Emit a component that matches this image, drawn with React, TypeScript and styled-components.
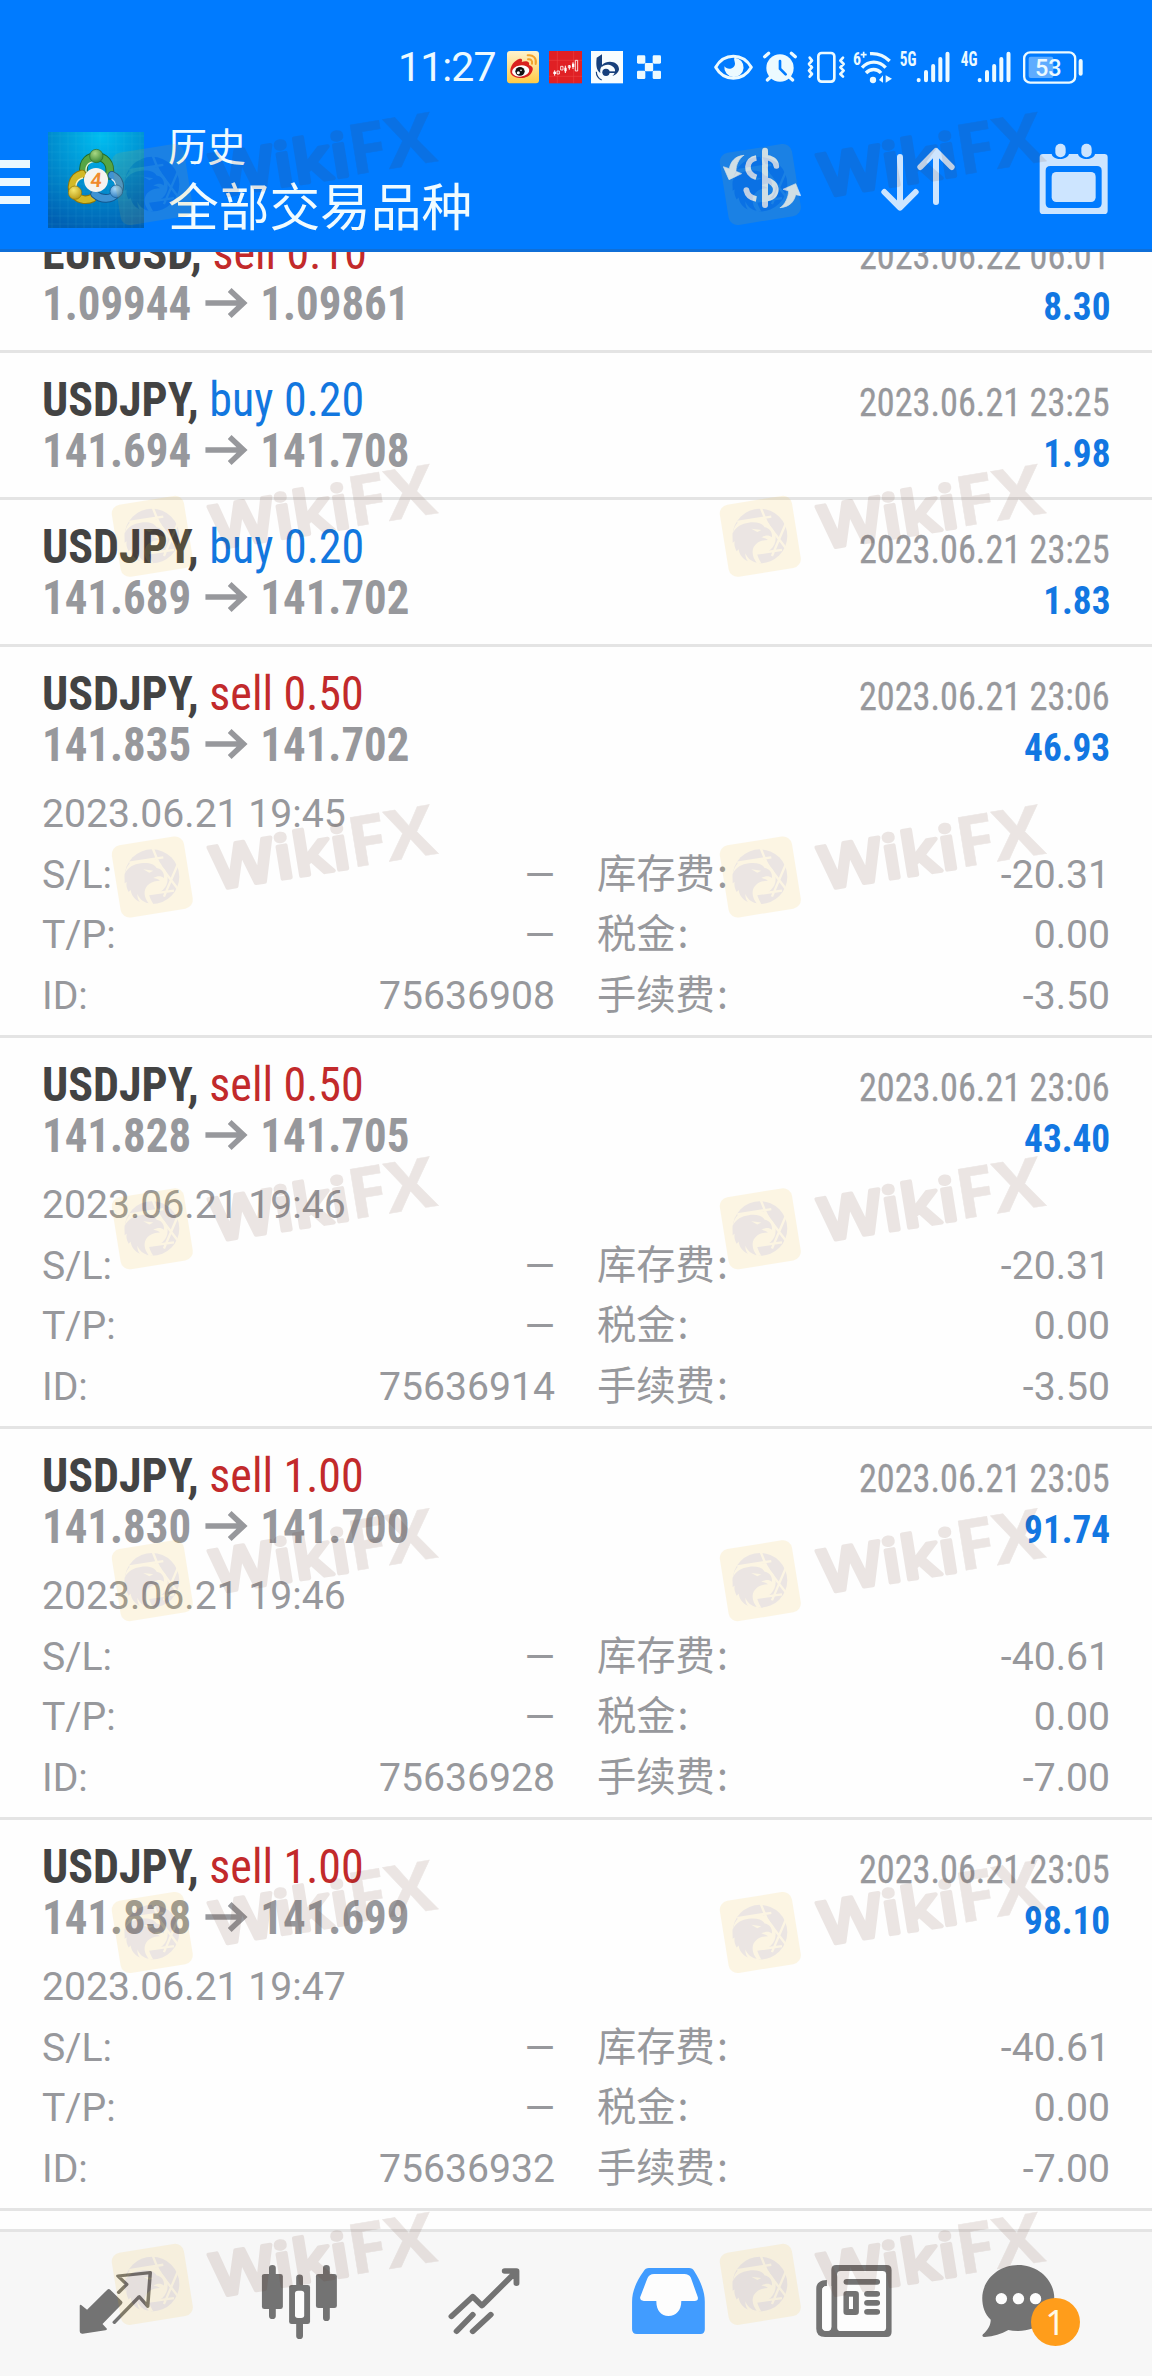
import React from "react";
import styled, { createGlobalStyle } from "styled-components";

const ROBOTO = `Roboto, "Noto Sans CJK SC", sans-serif`;
const CONDENSED = `"Roboto Condensed", Roboto, "Noto Sans CJK SC", sans-serif`;
const CJK = `"Noto Sans CJK SC", sans-serif`;

const GlobalStyle = createGlobalStyle`
  * { box-sizing: border-box; }
  body { margin: 0; background: #fff; }
`;

const Screen = styled.div`
  position: relative;
  width: 1152px;
  height: 2376px;
  display: flex;
  flex-direction: column;
  overflow: hidden;
  background: #fefefe;
  font-family: ${ROBOTO};
`;

/* ---------- status bar ---------- */

const StatusBar = styled.div`
  flex: none;
  height: 114px;
  padding: 51px 0 0 398px;
  display: flex;
  align-items: flex-start;
  background: #007bff;
  color: #ecf9ff;
`;

const Clock = styled.div`
  width: 109px;
  height: 33px;
  line-height: 33px;
  font-size: 41px;
  letter-spacing: -0.9px;
`;

const Glyph = styled.svg<{ $w: number; $gap?: number }>`
  flex: none;
  display: block;
  width: ${(p) => p.$w}px;
  height: 33px;
  margin-left: ${(p) => p.$gap ?? 0}px;
  overflow: visible;
`;

/* ---------- app bar ---------- */

const AppBar = styled.header`
  flex: none;
  height: 138px;
  padding-right: 44px;
  display: flex;
  align-items: flex-start;
  background: #007bff;
  border-bottom: 3px solid #0f6fd8;
`;

const Burger = styled.div`
  width: 30px;
  margin-top: 46px;
  display: flex;
  flex-direction: column;
  gap: 10px;
`;

const BurgerLine = styled.span`
  height: 8px;
  background: #eaf8ff;
`;

const Logo = styled.svg`
  width: 96px;
  height: 96px;
  margin: 18px 0 0 18px;
`;

const Titles = styled.div`
  margin-left: 24px;
  color: #f0fbff;
  font-family: ${CJK};
`;

const Title = styled.div<{ $size: number }>`
  height: 60px;
  line-height: 60px;
  font-size: ${(p) => p.$size}px;
`;

const Actions = styled.div`
  margin-left: auto;
  padding-top: 27px;
  display: flex;
  gap: 81px;
`;

const ActionIcon = styled.svg<{ $w: number; $nudge?: string }>`
  display: block;
  width: ${(p) => p.$w}px;
  height: 76px;
  margin: ${(p) => p.$nudge ?? "0"};
`;

/* ---------- deals ---------- */

const List = styled.main`
  flex: 1;
  min-height: 0;
  overflow: hidden;
  background: #fefefe;
`;

const Scroller = styled.div`
  margin-top: -46px;
`;

const Deal = styled.article<{ $open: boolean }>`
  height: ${(p) => (p.$open ? 391 : 147)}px;
  padding: 21px 42px 0;
  border-bottom: 3px solid #e4e4e4;
`;

const Line = styled.div`
  height: 51px;
  display: flex;
  justify-content: space-between;
  align-items: baseline;
  line-height: 51px;
  font-family: ${CONDENSED};
  font-stretch: 75%;
  white-space: pre;
`;

const Symbol = styled.div`
  font-size: 48px;
  font-weight: 700;
  color: #434343;
  transform: scaleX(0.958);
  transform-origin: left;
`;

const Side = styled.span<{ $buy: boolean }>`
  font-weight: 400;
  color: ${(p) => (p.$buy ? "#1277df" : "#c22a2b")};
`;

const Prices = styled.div`
  display: flex;
  align-items: baseline;
  font-size: 48px;
  font-weight: 700;
  color: #97989c;
  transform: scaleX(0.935);
  transform-origin: left;
`;

const Arrow = styled.svg`
  display: block;
  width: 74px;
  height: 34px;
`;

const Stamp = styled.div`
  font-size: 39px;
  color: #97989c;
  -webkit-text-stroke: 0.3px #97989c;
  transform: scaleX(0.93);
  transform-origin: right;
`;

const Profit = styled.div`
  font-size: 39px;
  font-weight: 700;
  color: #1277e2;
  transform: scaleX(0.955);
  transform-origin: right;
`;

const Details = styled.div`
  margin-top: 14px;
  display: grid;
  grid-template-columns: 1fr 1fr;
  column-gap: 42px;
  grid-auto-rows: 60.67px;
  color: #97989c;
  font-size: 39.15px;
  line-height: 60.67px;
  white-space: pre;
`;

const Opened = styled.div`
  grid-column: 1 / -1;
`;

const Field = styled.div`
  display: flex;
  justify-content: space-between;
  align-items: baseline;
`;

const CjkLabel = styled.span`
  font-family: ${CJK};
  font-size: 39.3px;
  line-height: 39px;
`;

const Colon = styled.span`
  margin-left: 2px;
`;

/* ---------- tab bar ---------- */

const TabBar = styled.nav`
  flex: none;
  height: 147px;
  padding: 31px 22px 0;
  display: grid;
  grid-template-columns: repeat(6, 1fr);
  justify-items: center;
  align-items: start;
  background: #f7f7f7;
  border-top: 3px solid #e4e4e4;
`;

const Tab = styled.div`
  position: relative;
  width: 120px;
  height: 84px;
`;

const TabIcon = styled.svg`
  display: block;
  width: 120px;
  height: 84px;
`;

const Badge = styled.span`
  position: absolute;
  left: 53px;
  top: 35px;
  width: 49px;
  height: 48px;
  border-radius: 50%;
  background: #ff9d1b;
  color: #fff9e6;
  font: 35px/48px "Noto Sans", sans-serif;
  text-align: center;
`;

/* ---------- watermark ---------- */

const Overlay = styled.svg`
  position: absolute;
  inset: 0;
  width: 1152px;
  height: 2376px;
  pointer-events: none;
`;

const MarkText = styled.text<{ $weight: number }>`
  font-family: "Open Sans", "Noto Sans", sans-serif;
  font-weight: ${(p) => p.$weight};
  fill: #5a2814;
  stroke: #5a2814;
  stroke-linejoin: round;
`;

type DealData = {
  symbol: string;
  side: "buy" | "sell";
  volume: string;
  from: string;
  to: string;
  closed: string;
  profit: string;
  details?: { opened: string; id: string; swap: string; tax: string; fee: string };
};

const deals: DealData[] = [
  { symbol: "EURUSD", side: "sell", volume: "0.10", from: "1.09944", to: "1.09861", closed: "2023.06.22 06:01", profit: "8.30" },
  { symbol: "USDJPY", side: "buy", volume: "0.20", from: "141.694", to: "141.708", closed: "2023.06.21 23:25", profit: "1.98" },
  { symbol: "USDJPY", side: "buy", volume: "0.20", from: "141.689", to: "141.702", closed: "2023.06.21 23:25", profit: "1.83" },
  {
    symbol: "USDJPY", side: "sell", volume: "0.50", from: "141.835", to: "141.702", closed: "2023.06.21 23:06", profit: "46.93",
    details: { opened: "2023.06.21 19:45", id: "75636908", swap: "-20.31", tax: "0.00", fee: "-3.50" },
  },
  {
    symbol: "USDJPY", side: "sell", volume: "0.50", from: "141.828", to: "141.705", closed: "2023.06.21 23:06", profit: "43.40",
    details: { opened: "2023.06.21 19:46", id: "75636914", swap: "-20.31", tax: "0.00", fee: "-3.50" },
  },
  {
    symbol: "USDJPY", side: "sell", volume: "1.00", from: "141.830", to: "141.700", closed: "2023.06.21 23:05", profit: "91.74",
    details: { opened: "2023.06.21 19:46", id: "75636928", swap: "-40.61", tax: "0.00", fee: "-7.00" },
  },
  {
    symbol: "USDJPY", side: "sell", volume: "1.00", from: "141.838", to: "141.699", closed: "2023.06.21 23:05", profit: "98.10",
    details: { opened: "2023.06.21 19:47", id: "75636932", swap: "-40.61", tax: "0.00", fee: "-7.00" },
  },
];

function Fee({ label, value }: { label: string; value: string }) {
  return (
    <Field>
      <CjkLabel>{label}<Colon>:</Colon></CjkLabel>
      <span>{value}</span>
    </Field>
  );
}

function DealRow({ deal }: { deal: DealData }) {
  const d = deal.details;
  return (
    <Deal $open={!!d}>
      <Line>
        <Symbol>
          {deal.symbol}, <Side $buy={deal.side === "buy"}>{deal.side} {deal.volume}</Side>
        </Symbol>
        <Stamp>{deal.closed}</Stamp>
      </Line>
      <Line>
        <Prices>
          <span>{deal.from}</span>
          <Arrow viewBox="0 0 70 34" preserveAspectRatio="none">
            <path d="M14 17H53M38.5 4L52.5 17L38.5 30" fill="none" stroke="#97989c" strokeWidth="5.6" />
          </Arrow>
          <span>{deal.to}</span>
        </Prices>
        <Profit>{deal.profit}</Profit>
      </Line>
      {d && (
        <Details>
          <Opened>{d.opened}</Opened>
          <Field><span>S/L:</span><span>—</span></Field>
          <Fee label="库存费" value={d.swap} />
          <Field><span>T/P:</span><span>—</span></Field>
          <Fee label="税金" value={d.tax} />
          <Field><span>ID:</span><span>{d.id}</span></Field>
          <Fee label="手续费" value={d.fee} />
        </Details>
      )}
    </Deal>
  );
}

const GLYPH = "#ecfaff";

function SignalBars() {
  return (
    <g stroke={GLYPH} strokeWidth="12" strokeLinecap="round">
      <path d="M56 150V151M78 126V151M99.500 108V151M121 87V151M142.500 71V151" />
    </g>
  );
}

function StatusIcons() {
  return (
    <>
      {/* weibo */}
      <Glyph $w={32} viewBox="0 0 96 99">
        <defs>
          <linearGradient id="wb" x1="0" y1="0" x2="0" y2="1">
            <stop offset="0" stopColor="#fdf3cf" />
            <stop offset="1" stopColor="#ffcb45" />
          </linearGradient>
        </defs>
        <rect width="96" height="97" rx="9" fill="url(#wb)" />
        <path d="M10 60C10 44 22 28 38 23C47 22 46 29 44 33C55 28 70 30 66 42C76 45 80 52 76 60C70 76 54 82 38 81C20 79 10 72 10 60Z" fill="#d9211f" />
        <ellipse cx="41" cy="60" rx="26" ry="17" fill="#fff" transform="rotate(-8 41 60)" />
        <ellipse cx="39" cy="61" rx="14" ry="13" fill="#111" />
        <circle cx="34" cy="65" r="4.500" fill="#fff" />
        <circle cx="42" cy="58" r="2.500" fill="#fff" />
        <path d="M62 13C78 10 90 22 86 39M63 25C71 23 77 29 75 38" fill="none" stroke="#f2a32c" strokeWidth="6" strokeLinecap="round" />
      </Glyph>
      {/* candlestick app */}
      <Glyph $w={33} $gap={9.5} viewBox="0 0 99 99">
        <rect width="99" height="97" fill="#e02024" />
        <path d="M0 28H99M0 76H99M25 0V97M74 0V97" stroke="#ec4a48" strokeWidth="1.500" />
        <path d="M17 58V74M49 44V66M61 42V56M72 34V54" stroke="#fff" strokeWidth="3" />
        <path d="M13 62H21V69H13ZM46 50H53V61H46ZM69 38H76V48H69Z" fill="#fff" />
        <path d="M24 60H31V69H24ZM35 46H42V57H35ZM58 44H64V50H58ZM79 28H86V60H79Z" fill="none" stroke="#fff" strokeWidth="2.500" />
      </Glyph>
      {/* circular b mark */}
      <Glyph $w={32} $gap={9.5} viewBox="0 0 96 99">
        <rect width="96" height="97" fill="#f8fdff" />
        <path d="M17 20L33 10V46C27 52 27 60 28 66C18 58 14 48 17 20Z" fill="#17407c" />
        <path d="M33 42C50 24 84 32 84 54C84 62 76 72 64 75C74 68 76 54 64 46C52 38 38 42 33 48Z" fill="#17407c" />
        <circle cx="45" cy="64" r="11" fill="#17407c" />
        <path d="M50 61H76V66H50Z" fill="#17407c" />
        <path d="M16 62C16 74 22 82 32 87" fill="none" stroke="#17407c" strokeWidth="3.500" />
      </Glyph>
      {/* pixel cluster */}
      <Glyph $w={24} $gap={14} viewBox="0 0 72 99" fill={GLYPH}>
        <rect x="0" y="13" width="25" height="25" rx="4" />
        <rect x="47" y="13" width="25" height="25" rx="4" />
        <rect x="23.500" y="36" width="25" height="25" rx="3" />
        <rect x="0" y="59" width="25" height="25" rx="4" />
        <rect x="47" y="59" width="25" height="25" rx="4" />
      </Glyph>
      {/* eye */}
      <Glyph $w={39} $gap={53} viewBox="0 0 117 99">
        <path d="M5 49C30 5 86 5 112 49C86 93 30 93 5 49Z" fill="none" stroke={GLYPH} strokeWidth="9" strokeLinejoin="round" />
        <path d="M62 20A29 29 0 1 1 31 46C40 58 62 54 63 38C63 30 58 24 62 20Z" fill={GLYPH} />
      </Glyph>
      {/* alarm */}
      <Glyph $w={34} $gap={10} viewBox="0 0 102 99">
        <circle cx="51" cy="51" r="41" fill={GLYPH} />
        <path d="M5 17L17 7M97 17L85 7M13 87L24 77M89 87L78 77" stroke={GLYPH} strokeWidth="10" strokeLinecap="round" />
        <path d="M51 30V53L68 70" fill="none" stroke="#007bff" strokeWidth="8" strokeLinecap="round" />
      </Glyph>
      {/* vibrate */}
      <Glyph $w={39} $gap={10} viewBox="0 0 117 99" fill="none" stroke={GLYPH} strokeWidth="8" strokeLinecap="round" strokeLinejoin="round">
        <rect x="34" y="6" width="48" height="86" rx="10" />
        <path d="M8 20L15 29L6 39L15 49L6 59L15 69L8 77M108 20L100 29L110 39L100 49L110 59L100 69L108 77" />
      </Glyph>
      {/* wifi */}
      <Glyph $w={39} $gap={7} viewBox="0 0 117 99">
        <g fill="none" stroke={GLYPH} strokeWidth="10">
          <path d="M51 8C76 6 94 14 110 30M27 50C47 28 78 28 98 50M39 66C52 52 72 52 84 66" />
        </g>
        <circle cx="60" cy="87" r="9.500" fill={GLYPH} />
        <path d="M90 73V95L78 87ZM98 73L117 83L98 95Z" fill={GLYPH} />
        <text x="0" y="42" fill={GLYPH} fontSize="56" fontWeight="700" fontFamily={CONDENSED} textLength="24" lengthAdjust="spacingAndGlyphs">6</text>
        <path d="M23 11H41M32 2V20" stroke={GLYPH} strokeWidth="5" />
      </Glyph>
      {["5G", "4G"].map((label, i) => (
        <Glyph key={label} $w={50} $gap={i ? 11 : 8} viewBox="0 0 150 99">
          <text x="-1" y="44" fill={GLYPH} fontSize="58" fontWeight="700" fontFamily={CONDENSED} textLength="50" lengthAdjust="spacingAndGlyphs">{label}</text>
          <g transform="translate(0 -63)"><SignalBars /></g>
        </Glyph>
      ))}
      {/* battery */}
      <Glyph $w={60} $gap={11.5} viewBox="0 0 180 99">
        <rect x="3.500" y="4" width="153" height="91" rx="18" fill="none" stroke={GLYPH} strokeWidth="7" />
        <rect x="17" y="17" width="74" height="64" rx="6" fill="#5eacff" />
        <path d="M173 30V68" stroke={GLYPH} strokeWidth="12" strokeLinecap="round" />
        <text x="36" y="75" fill={GLYPH} fontSize="74" fontWeight="500" fontFamily={ROBOTO} textLength="80" lengthAdjust="spacingAndGlyphs">53</text>
      </Glyph>
    </>
  );
}

function MetaTraderLogo() {
  const grid = Array.from({ length: 12 }, (_, i) => 156 + i * 24);
  return (
    <Logo viewBox="144 66 288 288">
      <defs>
        <radialGradient id="sky" cx="0.55" cy="0.05" r="1">
          <stop offset="0" stopColor="#00bdf0" />
          <stop offset="0.5" stopColor="#008fd0" />
          <stop offset="1" stopColor="#005fb2" />
        </radialGradient>
        <radialGradient id="gr" cx="0.4" cy="0.3" r="0.8"><stop offset="0" stopColor="#a9d884" /><stop offset="1" stopColor="#2c7d2a" /></radialGradient>
        <radialGradient id="ye" cx="0.4" cy="0.3" r="0.8"><stop offset="0" stopColor="#f6e76c" /><stop offset="1" stopColor="#b4920c" /></radialGradient>
        <radialGradient id="bl" cx="0.4" cy="0.3" r="0.8"><stop offset="0" stopColor="#a5d8fa" /><stop offset="1" stopColor="#2374bb" /></radialGradient>
      </defs>
      <rect x="144" y="66" width="288" height="288" fill="url(#sky)" />
      {grid.map((g) => (
        <path key={g} d={`M${g} 66V354M144 ${g - 78}H432`} stroke="#5fd0e6" strokeOpacity="0.15" strokeWidth="2" />
      ))}
      <g fill="none" strokeLinecap="round">
        <path d="M251 190C246 150 270 140 289 140C312 140 336 158 328 196" stroke="#1f6a2a" strokeWidth="26" />
        <path d="M251 190C246 150 270 140 289 140C312 140 336 158 328 196" stroke="#55a544" strokeWidth="20" />
        <path d="M258 186C256 162 270 154 289 154" stroke="#e4f3d8" strokeWidth="4" />
        <path d="M246 192C216 200 208 236 226 256C240 272 262 272 278 264" stroke="#8f7608" strokeWidth="26" />
        <path d="M246 192C216 200 208 236 226 256C240 272 262 272 278 264" stroke="#d2b926" strokeWidth="20" />
        <path d="M248 204C228 210 222 230 234 246" stroke="#fbf6c2" strokeWidth="4" />
        <path d="M336 196C360 208 366 232 350 250C334 270 304 270 284 252" stroke="#14578f" strokeWidth="26" />
        <path d="M336 196C360 208 366 232 350 250C334 270 304 270 284 252" stroke="#3f93d3" strokeWidth="20" />
        <path d="M336 208C348 216 350 228 340 240" stroke="#d6eefd" strokeWidth="4" />
      </g>
      <circle cx="289" cy="138" r="20" fill="url(#gr)" stroke="#25692a" strokeWidth="2" />
      <circle cx="225" cy="248" r="20" fill="url(#ye)" stroke="#8f7608" strokeWidth="2" />
      <circle cx="349" cy="244" r="19" fill="url(#bl)" stroke="#14578f" strokeWidth="2" />
      <circle cx="288" cy="210" r="36" fill="#f5f3f0" />
      <text x="288" y="231" textAnchor="middle" fontFamily={ROBOTO} fontWeight="600" fontSize="60" fill="#f08a2c" transform="skewX(-6) translate(23 0)">4</text>
    </Logo>
  );
}

function AppActions() {
  const c = "#cde5ff";
  return (
    <Actions>
      <ActionIcon $w={78} viewBox="189 93 234 228" fill="none" stroke={c} strokeLinecap="round">
        <path d="M315 122V285" strokeWidth="18" />
        <path d="M349 168C347 152 334 143 315 143" strokeWidth="17" />
        <path d="M289 144C259 148 252 190 289 202" strokeWidth="17" strokeLinecap="butt" />
        <path d="M315 210C358 214 358 266 315 266" strokeWidth="17" />
        <path d="M259 240C262 256 272 264 289 267" strokeWidth="17" strokeLinecap="butt" />
        <circle cx="259" cy="240" r="8.500" fill={c} stroke="none" />
        <path d="M251 136C226 138 212 154 208 176L190 170L207 209L245 191L228 184C228 164 236 148 251 136Z" fill={c} stroke={c} strokeWidth="2" strokeLinejoin="round" />
        <path d="M361 293C388 291 402 276 407 254L422 257L407 221L369 238L386 243C385 262 376 282 361 293Z" fill={c} stroke={c} strokeWidth="2" strokeLinejoin="round" />
      </ActionIcon>
      <ActionIcon $w={75} $nudge="0 2px 0 -1px" viewBox="663 93 225 228" fill="none" stroke={c} strokeWidth="18" strokeLinecap="round" strokeLinejoin="round">
        <path d="M720 141V292M673 246L720 293L767 246M828 276V124M781 171L828 123L875 171" />
      </ActionIcon>
      <ActionIcon $w={69} viewBox="1138 93 207 228" fill={c}>
        <path fillRule="evenodd" d="M1150 132H1176C1180 152 1222 152 1228 132H1255C1260 152 1302 152 1306 132H1334Q1344 132 1344 142V302Q1344 312 1334 312H1150Q1140 312 1140 302V142Q1140 132 1150 132ZM1172 168Q1158 168 1158 182V280Q1158 294 1172 294H1312Q1326 294 1326 280V182Q1326 168 1312 168Z" />
        <rect x="1187" y="101" width="31" height="41" rx="15" />
        <rect x="1265" y="101" width="31" height="41" rx="15" />
        <rect x="1176" y="186" width="132" height="90" rx="14" />
      </ActionIcon>
    </Actions>
  );
}

const INK = "#737373";

function Tabs() {
  return (
    <TabBar>
      <Tab>
        <TabIcon viewBox="148 249 326.600 252" preserveAspectRatio="none">
          <path d="M222 375L238 389L293 329Q297 325 301 329L333 364Q336 368 333 372L280 432L292 446Q293 450 288 451L226 461Q218 462 218 454V378Q218 373 222 375Z" fill={INK} />
          <path d="M324 337L346 313L322 288L410 278L403 379L380 350L312 427" fill="none" stroke={INK} strokeWidth="9.500" strokeLinecap="round" strokeLinejoin="round" />
        </TabIcon>
      </Tab>
      <Tab>
        <TabIcon viewBox="650.600 249 326.600 252" preserveAspectRatio="none" fill={INK}>
          <path d="M741.500 264V408M888.500 264V414M815.500 293V468" stroke={INK} strokeWidth="18.500" strokeLinecap="round" />
          <rect x="713" y="282" width="57" height="105" rx="7" />
          <rect x="860" y="282" width="57" height="102" rx="7" />
          <rect x="787" y="315" width="57" height="117" rx="7" />
          <rect x="803" y="332" width="25" height="82" rx="8" fill="#fdfdfd" />
        </TabIcon>
      </Tab>
      <Tab>
        <TabIcon viewBox="1153.300 249 326.600 252" preserveAspectRatio="none" fill="none" stroke={INK} strokeWidth="16" strokeLinecap="round" strokeLinejoin="round">
          <path d="M1228 409L1286 350L1311 377L1404 275M1373 273H1405V310" />
          <path d="M1242 454L1286 404M1286 454L1335 404" />
        </TabIcon>
      </Tab>
      <Tab>
        <TabIcon viewBox="86.500 249 326.600 252" preserveAspectRatio="none">
          <path d="M198 264H307Q317 264 321 273C339 305 350 335 350 365V448Q350 462 338 462H165Q152 462 152 448V365C152 335 163 305 184 273Q188 264 198 264Z" fill="#419cff" />
          <path d="M212 282H294Q307 282 312 293L331 352Q333 363 322 363H286C286 392 272 408 251 408C231 408 218 392 218 363H184Q173 362 174 352L193 297Q198 282 212 282Z" fill="#fdfdfd" />
        </TabIcon>
      </Tab>
      <Tab>
        <TabIcon viewBox="590.700 249 326.600 252" preserveAspectRatio="none">
          <path d="M683 300C664 300 654 310 654 326V446Q654 471 678 471H846Q859 471 859 456V270Q859 255 846 255H708Q695 255 695 270V440Q695 453 683 453Q670 453 670 440V332Q670 318 683 318Z" fill={INK} />
          <path d="M683 318Q670 318 670 332V440Q670 453 683 453Q695 453 695 440V318Z" fill="#fdfdfd" />
          <rect x="711" y="273" width="133" height="180" rx="10" fill="#fdfdfd" />
          <path d="M737 305.500H819M793 341.500H819M793 368.500H819M793 395.500H819" stroke={INK} strokeWidth="17.500" strokeLinecap="round" />
          <rect x="728" y="333" width="42" height="72" rx="9" fill={INK} />
          <rect x="743" y="350" width="11" height="37" fill="#fdfdfd" />
        </TabIcon>
      </Tab>
      <Tab>
        <TabIcon viewBox="1093.400 249 326.600 252" preserveAspectRatio="none">
          <path d="M1203 255C1257 255 1301 300 1301 355C1301 410 1257 453 1203 453Q1187 453 1176 450C1157 462 1136 470 1112 471Q1102 470 1107 463C1120 450 1128 436 1128 419C1112 403 1105 380 1105 355C1105 300 1149 255 1203 255Z" fill={INK} />
          <ellipse cx="1157" cy="356" rx="15.500" ry="17" fill="#fdfdfd" />
          <ellipse cx="1203.500" cy="356" rx="15.500" ry="17" fill="#fdfdfd" />
          <ellipse cx="1250" cy="356" rx="15.500" ry="17" fill="#fdfdfd" />
        </TabIcon>
        <Badge>1</Badge>
      </Tab>
    </TabBar>
  );
}

const markRows = [184.5, 536.3, 877, 1228.8, 1580.7, 1932.5, 2284.4];
const markColumns = [152.3, 760.3];

function Watermark({ x, y }: { x: number; y: number }) {
  return (
    <g transform={`translate(${x} ${y})`} opacity="0.11">
      <g transform="rotate(-9.15)">
        <rect x="-36.500" y="-36.500" width="73" height="73" rx="9" fill="#f0b414" />
        <MarkText $weight={600} x="60" y="22.500" fontSize="60" strokeWidth="4" textLength="139" lengthAdjust="spacingAndGlyphs">Wiki</MarkText>
        <MarkText $weight={700} x="198.500" y="22.500" fontSize="70" strokeWidth="0.5" textLength="39" lengthAdjust="spacingAndGlyphs">F</MarkText>
        <MarkText $weight={700} x="236.500" y="22.500" fontSize="70" strokeWidth="0.5" textLength="50" lengthAdjust="spacingAndGlyphs">X</MarkText>
      </g>
      <g transform="scale(0.3333) translate(-181 -259)">
        <circle cx="180" cy="258" r="82" fill="#5a2814" />
        <path d="M98 262C98 240 104 226 116 216C140 214 150 208 182 206C204 206 214 226 221 262L190 272C170 284 160 300 184 340L160 340C110 330 98 290 98 262Z" fill="#f0b414" />
        <path d="M182 172L202 222L262 300M112 216L214 200M262 210L216 318M246 300L160 312M178 352L150 290" stroke="#f0b414" strokeWidth="7" fill="none" />
        <circle cx="180" cy="264" r="47" fill="#f0b414" />
        <path d="M98 250C108 230 126 220 146 218C168 214 188 220 194 232C208 234 218 246 216 262C206 254 196 256 184 262C194 264 200 266 204 270C180 270 160 282 158 304C157 318 164 330 170 338C150 334 142 322 136 310C136 322 140 330 144 334C126 326 118 312 116 298L110 304C104 292 102 284 104 274L98 278Z" fill="#5a2814" />
        <path d="M154 236L184 240L172 246Z" fill="#f0b414" />
      </g>
    </g>
  );
}

export default function App() {
  return (
    <Screen>
      <GlobalStyle />
      <StatusBar>
        <Clock>11:27</Clock>
        <StatusIcons />
      </StatusBar>
      <AppBar>
        <Burger>
          <BurgerLine />
          <BurgerLine />
          <BurgerLine />
        </Burger>
        <MetaTraderLogo />
        <Titles>
          <Title $size={39}>历史</Title>
          <Title $size={50.7}>全部交易品种</Title>
        </Titles>
        <AppActions />
      </AppBar>
      <List>
        <Scroller>
          {deals.map((deal, i) => (
            <DealRow key={i} deal={deal} />
          ))}
        </Scroller>
      </List>
      <Tabs />
      <Overlay viewBox="0 0 1152 2376">
        {markRows.flatMap((y) => markColumns.map((x) => <Watermark key={`${x}-${y}`} x={x} y={y} />))}
      </Overlay>
    </Screen>
  );
}
